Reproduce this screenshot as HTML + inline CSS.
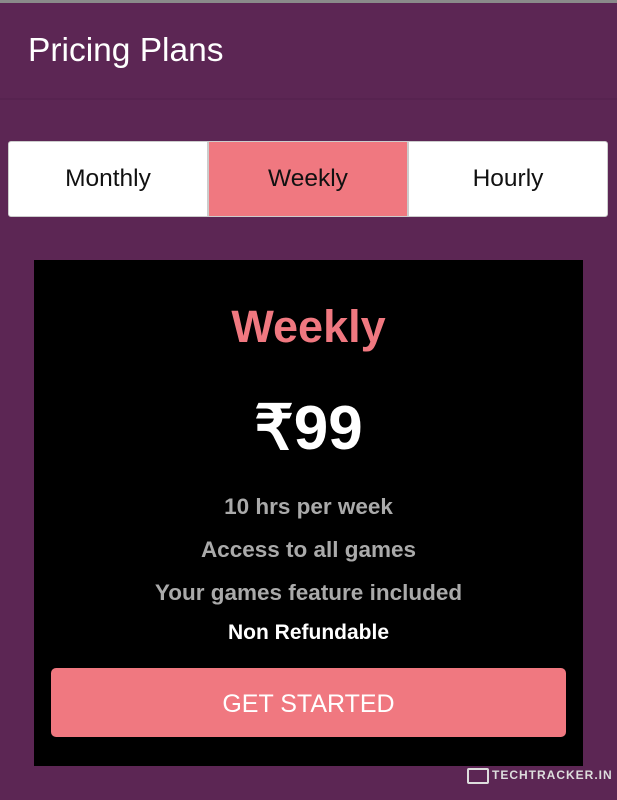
<!DOCTYPE html>
<html><head><style>
body{margin:0;width:617px;height:800px;background:#5c2654;font-family:"Liberation Sans",sans-serif;position:relative;overflow:hidden}
.top{position:absolute;left:0;top:0;width:617px;height:3px;background:#8a8a8a}
.hdr{position:absolute;left:0;top:3px;width:617px;height:95px;border-bottom:2px solid #572350}
.hdr span{position:absolute;left:28px;top:29px;color:#fff;font-size:33.5px}
.tabs{position:absolute;left:8px;top:141px;width:598px;height:74px;background:#fff;border:1px solid #ccc;border-radius:3px;display:flex;overflow:hidden}
.tabs div{flex:1;display:flex;align-items:center;justify-content:center;font-size:24.5px;color:#111}
.tabs .a{background:#f07880;border-left:2px solid #ccc;border-right:2px solid #ccc}
.card{position:absolute;left:34px;top:260px;width:549px;height:506px;background:#000;text-align:center}
.btn{position:absolute;left:17px;top:408px;width:515px;height:69px;background:#f07880;border-radius:5px;color:#fff;font-size:25px;line-height:72px}
.f{position:absolute;width:100%;color:#aaa;font-size:22.5px;font-weight:bold}
.wm{position:absolute;left:467px;top:768px;color:#ddd;font-size:12px;font-weight:bold;letter-spacing:1px}
</style></head><body>
<div class="top"></div>
<div class="hdr"><span>Pricing Plans</span></div>
<div class="tabs"><div>Monthly</div><div class="a">Weekly</div><div>Hourly</div></div>
<div class="card">
<div style="position:absolute;width:100%;top:41px;color:#f07880;font-size:45px;font-weight:bold">Weekly</div>
<div style="position:absolute;width:100%;top:131px;color:#fff;font-size:62px;font-weight:bold">₹99</div>
<div class="f" style="top:234px">10 hrs per week</div>
<div class="f" style="top:277px">Access to all games</div>
<div class="f" style="top:320px">Your games feature included</div>
<div style="position:absolute;width:100%;top:361px;color:#fff;font-size:21px;font-weight:bold">Non Refundable</div>
<div class="btn">GET STARTED</div>
</div>
<div class="wm"><span style="display:inline-block;width:18px;height:12px;border:2px solid #ddd;border-radius:2px;vertical-align:middle;margin-right:3px"></span>TECHTRACKER.IN</div>
</body></html>
